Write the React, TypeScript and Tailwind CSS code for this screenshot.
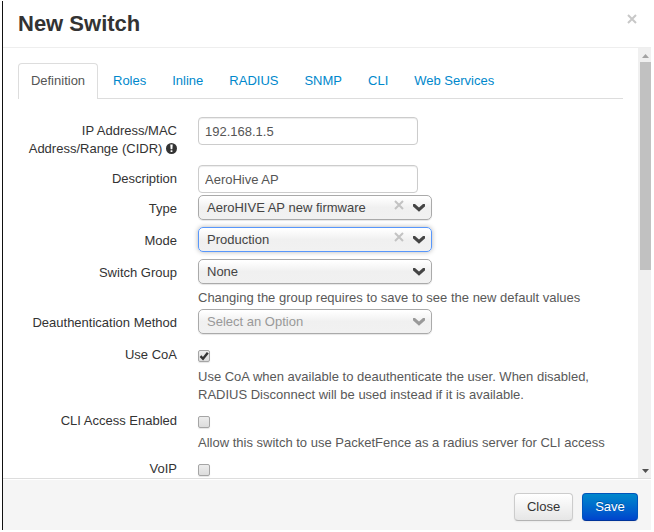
import type { ReactNode } from 'react';

const tabs = ['Roles', 'Inline', 'RADIUS', 'SNMP', 'CLI', 'Web Services'];

function Row({ label, height, children }: { label: ReactNode; height: string; children: ReactNode }) {
  return (
    <div className={`flex shrink-0 gap-[21px] ${height}`}>
      <div className="w-[159px] shrink-0 pt-[5px] text-right text-[#333]">{label}</div>
      <div className="flex w-[426px] flex-col items-start">{children}</div>
    </div>
  );
}

function TextField({ value }: { value: string }) {
  return (
    <input
      readOnly
      value={value}
      className="h-[28px] w-[220px] rounded-[4px] border border-[#ccc] bg-white px-[6px] text-[13px] text-[#555] shadow-[inset_0_1px_1px_rgba(0,0,0,0.075)] outline-none"
    />
  );
}

function Cross({ className }: { className: string }) {
  return (
    <svg viewBox="0 0 10 10" className={className} fill="none" stroke="currentColor" strokeWidth="2">
      <path d="M1 1 9 9M9 1 1 9" />
    </svg>
  );
}

function Select({ value, clearable, focused, muted }: { value: string; clearable?: boolean; focused?: boolean; muted?: boolean }) {
  return (
    <div
      className={`flex h-[25px] w-[234px] shrink-0 items-center rounded-[5px] border bg-linear-to-b from-white from-5% via-[#f0f0f0] via-50% to-[#f1f1f1] pr-[6px] pl-[8px] ${
        focused ? 'border-[#5897fb] shadow-[0_0_5px_rgba(0,0,0,0.3)]' : 'border-[#aaa] shadow-[0_1px_1px_rgba(0,0,0,0.1)]'
      } ${muted ? 'text-[#999]' : 'text-[#444]'}`}
    >
      <span className="grow">{value}</span>
      {clearable && <Cross className="mr-[9px] mb-[5px] size-[10px] text-[#c3c3c3]" />}
      <svg viewBox="0 0 12 8" className={`mt-px h-[8px] w-[12px] ${muted ? 'text-[#999]' : 'text-[#444]'}`} fill="none" stroke="currentColor" strokeWidth="3.2">
        <path d="M1.2 1.4 6 5.7 10.8 1.4" strokeLinecap="round" />
      </svg>
    </div>
  );
}

function Checkbox({ checked }: { checked?: boolean }) {
  return (
    <span className="mt-[9px] mb-[6px] flex size-[12px] shrink-0 items-center justify-center rounded-[2px] border border-[#a5a5a5] bg-linear-to-b from-[#ededed] to-[#dcdcdc] shadow-[0_1px_1px_rgba(0,0,0,0.1)]">
      {checked && (
        <svg viewBox="0 0 10 10" className="size-[10px] shrink-0" fill="none" stroke="#333" strokeWidth="2.4">
          <path d="M1.5 5.2 4 7.8 8.8 1.8" />
        </svg>
      )}
    </span>
  );
}

function Help({ children }: { children: ReactNode }) {
  return <p className="whitespace-nowrap text-[#595959]">{children}</p>;
}

export default function App() {
  return (
    <div className="h-[532px] w-[654px] overflow-hidden bg-white pt-px pl-[2px] font-['Liberation_Sans',Arial,sans-serif] text-[13px] leading-[18px]">
      <div className="flex h-[529px] w-[649px] flex-col border-l border-[#111] bg-white">
        <header className="flex h-[47px] shrink-0 items-start justify-between border-b border-[#eee] pr-[14px] pl-[15px]">
          <h1 className="pt-[8px] text-[22px] leading-[30px] font-bold text-[#333]">New Switch</h1>
          <Cross className="mt-[13px] size-[10px] text-[#c8c8c8]" />
        </header>

        <div className="flex h-[430px] shrink-0">
          <main className="w-[635px] overflow-hidden pt-[15px] pl-[15px]">
            <nav className="flex h-[36px] w-[605px]">
              <span className="w-[80px] rounded-t-[4px] border border-b-0 border-[#ddd] pt-[8px] text-center text-[#555]">Definition</span>
              <div className="flex grow gap-[26px] border-b border-[#ddd] pt-[9px] pl-[15px]">
                {tabs.map((t) => (
                  <span key={t} className="whitespace-nowrap text-[#0088cc]">{t}</span>
                ))}
              </div>
            </nav>

            <form className="mt-[18px] flex flex-col">
              <Row
                height="h-[48px]"
                label={
                  <>
                    IP Address/MAC
                    <br />
                    Address/Range (CIDR){' '}
                    <svg viewBox="0 0 11 11" className="inline-block size-[11px] align-[-1px]">
                      <circle cx="5.5" cy="5.5" r="5.5" fill="#333" />
                      <path d="M4.3 1.5h2.4L6.4 6.3H4.6zM4.6 7.3h1.8v1.8H4.6z" fill="#fff" />
                    </svg>
                  </>
                }
              >
                <TextField value="192.168.1.5" />
              </Row>
              <Row height="h-[30px]" label="Description">
                <TextField value="AeroHive AP" />
              </Row>
              <Row height="h-[32px]" label="Type">
                <Select value="AeroHIVE AP new firmware" clearable />
              </Row>
              <Row height="h-[32px]" label="Mode">
                <Select value="Production" clearable focused />
              </Row>
              <Row height="h-[50px]" label="Switch Group">
                <Select value="None" />
                <div className="mt-[5px]">
                  <Help>Changing the group requires to save to see the new default values</Help>
                </div>
              </Row>
              <Row height="h-[32px]" label="Deauthentication Method">
                <Select value="Select an Option" muted />
              </Row>
              <Row height="h-[66px]" label="Use CoA">
                <Checkbox checked />
                <Help>
                  Use CoA when available to deauthenticate the user. When disabled,
                  <br />
                  RADIUS Disconnect will be used instead if it is available.
                </Help>
              </Row>
              <Row height="h-[48px]" label="CLI Access Enabled">
                <Checkbox />
                <Help>Allow this switch to use PacketFence as a radius server for CLI access</Help>
              </Row>
              <Row height="h-[23px]" label="VoIP">
                <Checkbox />
              </Row>
            </form>
          </main>

          <div className="flex w-[13px] flex-col items-end bg-[#f0f0f0]">
            <svg viewBox="0 0 11 14" className="h-[14px] w-[11px]">
              <path d="M2 10h7L5.5 6z" fill="#a3a3a3" />
            </svg>
            <div className="h-[208px] w-[11px] bg-[#c1c1c1]" />
            <svg viewBox="0 0 11 14" className="mt-auto h-[14px] w-[11px]">
              <path d="M2 5h7L5.5 9z" fill="#505050" />
            </svg>
          </div>
        </div>

        <footer className="flex grow items-start justify-end gap-[9px] border-t border-[#ddd] bg-[#f5f5f5] pt-[14px] pr-[13px] shadow-[inset_0_1px_0_#fff]">
          <button className="h-[28px] w-[59px] rounded-[4px] border border-[#ccc] border-b-[#b3b3b3] bg-linear-to-b from-white to-[#e6e6e6] text-[#333] shadow-[0_1px_2px_rgba(0,0,0,0.05)]">Close</button>
          <button className="h-[28px] w-[56px] rounded-[4px] border border-[#0055bb] border-b-[#003399] bg-linear-to-b from-[#0088cc] to-[#0044cc] text-white shadow-[0_1px_2px_rgba(0,0,0,0.05)] text-shadow-[0_-1px_0_rgba(0,0,0,0.25)]">Save</button>
        </footer>
      </div>
    </div>
  );
}
